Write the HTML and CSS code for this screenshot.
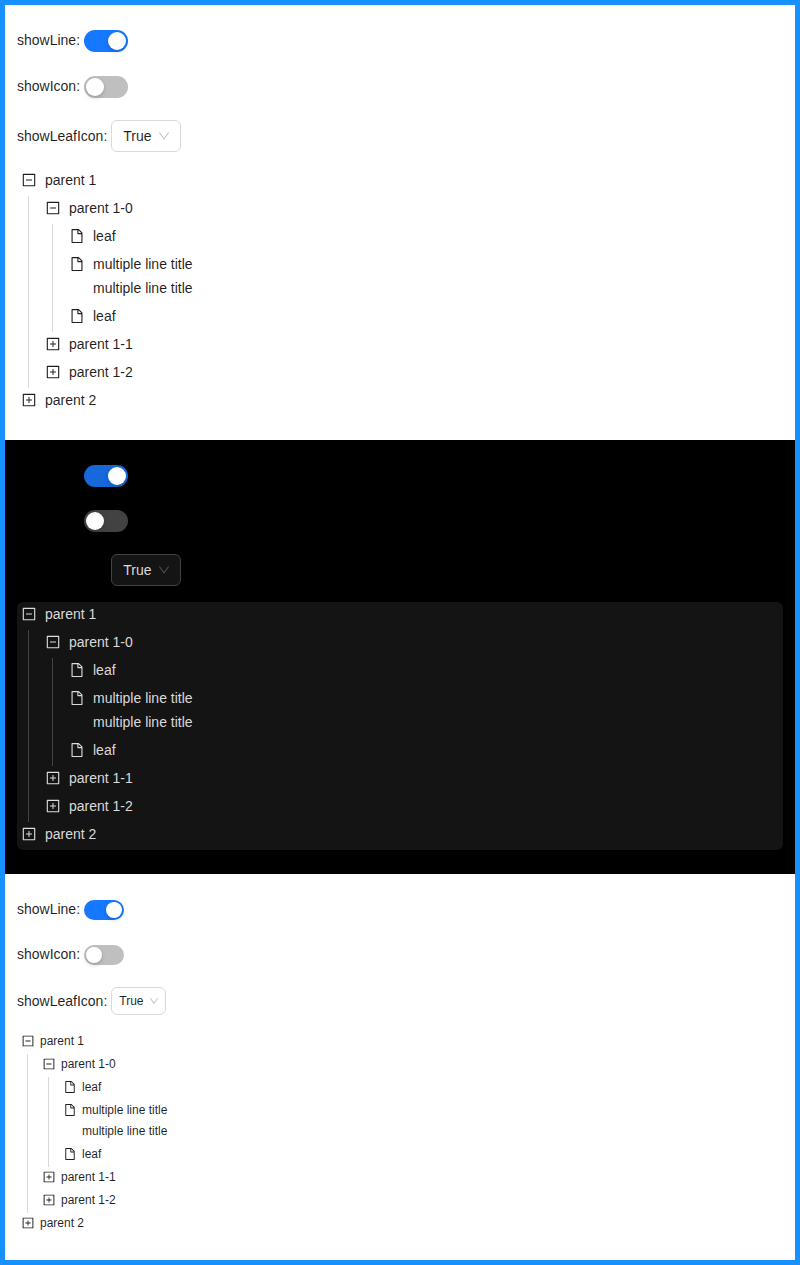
FILE: index.html
```html
<!DOCTYPE html>
<html lang="en">
<head>
<meta charset="utf-8">
<meta name="viewport" content="width=device-width, initial-scale=1">
<title>Tree with line</title>
<link rel="stylesheet" href="styles.css">
</head>
<body>
<svg class="sprite" aria-hidden="true">
  <symbol id="minus" viewBox="64 64 896 896"><path d="M328 544h368c4.400 0 8-3.600 8-8v-48c0-4.400-3.600-8-8-8H328c-4.400 0-8 3.600-8 8v48c0 4.400 3.600 8 8 8z"/><path d="M880 112H144c-17.700 0-32 14.300-32 32v736c0 17.700 14.300 32 32 32h736c17.700 0 32-14.300 32-32V144c0-17.700-14.300-32-32-32zm-40 728H184V184h656v656z"/></symbol>
  <symbol id="plus" viewBox="64 64 896 896"><path d="M328 544h152v152c0 4.400 3.600 8 8 8h48c4.400 0 8-3.600 8-8V544h152c4.400 0 8-3.600 8-8v-48c0-4.400-3.600-8-8-8H544V328c0-4.400-3.600-8-8-8h-48c-4.400 0-8 3.600-8 8v152H328c-4.400 0-8 3.600-8 8v48c0 4.400 3.600 8 8 8z"/><path d="M880 112H144c-17.700 0-32 14.300-32 32v736c0 17.700 14.300 32 32 32h736c17.700 0 32-14.300 32-32V144c0-17.700-14.300-32-32-32zm-40 728H184V184h656v656z"/></symbol>
  <symbol id="file" viewBox="64 64 896 896"><path d="M854.600 288.600L639.400 73.400c-6-6-14.100-9.400-22.600-9.400H192c-17.700 0-32 14.300-32 32v832c0 17.700 14.300 32 32 32h640c17.700 0 32-14.300 32-32V311.300c0-8.500-3.400-16.700-9.400-22.700zM790.200 326H602V137.800L790.200 326zm1.800 562H232V136h302v216a42 42 0 0042 42h216v494z"/></symbol>
  <symbol id="down" viewBox="64 64 896 896"><path d="M884 256h-75c-5.100 0-9.900 2.500-12.900 6.600L512 654.200 227.900 262.600c-3-4.100-7.800-6.600-12.900-6.600h-75c-6.500 0-10.300 7.400-6.500 12.700l352.600 486.100c12.800 17.600 39 17.600 51.700 0l352.600-486.100c3.900-5.300.1-12.700-6.400-12.700z"/></symbol>
</svg>
<main class="themes">
  <section class="panel">
    <div class="field"><label for="line-a">showLine:</label><input class="toggle" type="checkbox" role="switch" id="line-a" checked></div>
    <div class="field"><label for="icon-a">showIcon:</label><input class="toggle" type="checkbox" role="switch" id="icon-a"></div>
    <div class="field field-select"><label for="leaf-a">showLeafIcon:</label><span class="select"><select id="leaf-a"><option>True</option></select><svg class="arrow" aria-hidden="true"><use href="#down"/></svg></span></div>
    <ul class="tree">
      <li>
        <div class="node"><button class="switcher" type="button" aria-label="Collapse parent 1"><svg><use href="#minus"/></svg></button><span class="title">parent 1</span></div>
        <ul>
          <li>
            <div class="node"><button class="switcher" type="button" aria-label="Collapse parent 1-0"><svg><use href="#minus"/></svg></button><span class="title">parent 1-0</span></div>
            <ul>
              <li class="node"><span class="switcher"><svg><use href="#file"/></svg></span><span class="title">leaf</span></li>
              <li class="node"><span class="switcher"><svg><use href="#file"/></svg></span><span class="title">multiple line title<br>multiple line title</span></li>
              <li class="node"><span class="switcher"><svg><use href="#file"/></svg></span><span class="title">leaf</span></li>
            </ul>
          </li>
          <li class="node"><button class="switcher" type="button" aria-label="Expand parent 1-1"><svg><use href="#plus"/></svg></button><span class="title">parent 1-1</span></li>
          <li class="node"><button class="switcher" type="button" aria-label="Expand parent 1-2"><svg><use href="#plus"/></svg></button><span class="title">parent 1-2</span></li>
        </ul>
      </li>
      <li class="node"><button class="switcher" type="button" aria-label="Expand parent 2"><svg><use href="#plus"/></svg></button><span class="title">parent 2</span></li>
    </ul>
  </section>

  <section class="panel dark">
    <div class="field"><label for="line-b">showLine:</label><input class="toggle" type="checkbox" role="switch" id="line-b" checked></div>
    <div class="field"><label for="icon-b">showIcon:</label><input class="toggle" type="checkbox" role="switch" id="icon-b"></div>
    <div class="field field-select"><label for="leaf-b">showLeafIcon:</label><span class="select"><select id="leaf-b"><option>True</option></select><svg class="arrow" aria-hidden="true"><use href="#down"/></svg></span></div>
    <ul class="tree">
      <li>
        <div class="node"><button class="switcher" type="button" aria-label="Collapse parent 1"><svg><use href="#minus"/></svg></button><span class="title">parent 1</span></div>
        <ul>
          <li>
            <div class="node"><button class="switcher" type="button" aria-label="Collapse parent 1-0"><svg><use href="#minus"/></svg></button><span class="title">parent 1-0</span></div>
            <ul>
              <li class="node"><span class="switcher"><svg><use href="#file"/></svg></span><span class="title">leaf</span></li>
              <li class="node"><span class="switcher"><svg><use href="#file"/></svg></span><span class="title">multiple line title<br>multiple line title</span></li>
              <li class="node"><span class="switcher"><svg><use href="#file"/></svg></span><span class="title">leaf</span></li>
            </ul>
          </li>
          <li class="node"><button class="switcher" type="button" aria-label="Expand parent 1-1"><svg><use href="#plus"/></svg></button><span class="title">parent 1-1</span></li>
          <li class="node"><button class="switcher" type="button" aria-label="Expand parent 1-2"><svg><use href="#plus"/></svg></button><span class="title">parent 1-2</span></li>
        </ul>
      </li>
      <li class="node"><button class="switcher" type="button" aria-label="Expand parent 2"><svg><use href="#plus"/></svg></button><span class="title">parent 2</span></li>
    </ul>
  </section>

  <section class="panel compact">
    <div class="field"><label for="line-c">showLine:</label><input class="toggle" type="checkbox" role="switch" id="line-c" checked></div>
    <div class="field"><label for="icon-c">showIcon:</label><input class="toggle" type="checkbox" role="switch" id="icon-c"></div>
    <div class="field field-select"><label for="leaf-c">showLeafIcon:</label><span class="select"><select id="leaf-c"><option>True</option></select><svg class="arrow" aria-hidden="true"><use href="#down"/></svg></span></div>
    <ul class="tree">
      <li>
        <div class="node"><button class="switcher" type="button" aria-label="Collapse parent 1"><svg><use href="#minus"/></svg></button><span class="title">parent 1</span></div>
        <ul>
          <li>
            <div class="node"><button class="switcher" type="button" aria-label="Collapse parent 1-0"><svg><use href="#minus"/></svg></button><span class="title">parent 1-0</span></div>
            <ul>
              <li class="node"><span class="switcher"><svg><use href="#file"/></svg></span><span class="title">leaf</span></li>
              <li class="node"><span class="switcher"><svg><use href="#file"/></svg></span><span class="title">multiple line title<br>multiple line title</span></li>
              <li class="node"><span class="switcher"><svg><use href="#file"/></svg></span><span class="title">leaf</span></li>
            </ul>
          </li>
          <li class="node"><button class="switcher" type="button" aria-label="Expand parent 1-1"><svg><use href="#plus"/></svg></button><span class="title">parent 1-1</span></li>
          <li class="node"><button class="switcher" type="button" aria-label="Expand parent 1-2"><svg><use href="#plus"/></svg></button><span class="title">parent 1-2</span></li>
        </ul>
      </li>
      <li class="node"><button class="switcher" type="button" aria-label="Expand parent 2"><svg><use href="#plus"/></svg></button><span class="title">parent 2</span></li>
    </ul>
  </section>
</main>
</body>
</html>
```

FILE: styles.css
```css
*, *::before {
  box-sizing: border-box;
}

body {
  margin: 0;
  color: rgba(0, 0, 0, 0.88);
  font: 14px/22px "Liberation Sans", Arial, sans-serif;
}

.sprite {
  display: none;
}

.themes {
  border: 5px solid #1890ff;
}

.panel {
  --first-gap: 22px;
  --second-gap: 21px;
  --primary: #1677ff;
  --track: #bfbfbf;
  --text: rgba(0, 0, 0, 0.88);
  --surface: #fff;
  --line: #d9d9d9;
  --arrow: rgba(0, 0, 0, 0.25);
  --font: 14px;
  --row: 24px;
  --row-gap: 4px;
  --icon: 14px;
  --icon-row: 24px;
  --icon-inset: 5px;
  --title-pad: 4px;
  --guide-start: 11px;
  --guide-pad: 12px;
  --toggle-width: 44px;
  --handle: 18px;
  --select-width: 70px;
  --select-height: 32px;
  --select-pad: 11px;
  --arrow-size: 12px;
  padding: 24px 12px;
  background: #fff;
}

.dark {
  --first-gap: 21px;
  --primary: #1668dc;
  --track: #424242;
  --text: rgba(255, 255, 255, 0.85);
  --surface: #141414;
  --line: #424242;
  --arrow: rgba(255, 255, 255, 0.25);
  background: #000;
}

.compact {
  --first-gap: 21px;
  --second-gap: 20px;
  --font: 12px;
  --row: 21px;
  --row-gap: 2px;
  --icon: 12px;
  --icon-row: 20px;
  --title-pad: 2px;
  --guide-start: 10px;
  --guide-pad: 10px;
  --toggle-width: 40px;
  --handle: 16px;
  --select-width: 55px;
  --select-height: 28px;
  --select-pad: 7px;
  --arrow-size: 10px;
}

/* Controls */
.field {
  display: flex;
  align-items: center;
  gap: 4px;
  min-height: 24px;
  margin-bottom: var(--second-gap);
}

.field:first-child {
  margin-bottom: var(--first-gap);
}

.field label {
  padding-bottom: 2px;
}

.field-select {
  margin-bottom: 16px;
}

.field-select label {
  padding-bottom: 0;
}

.toggle {
  display: flex;
  appearance: none;
  width: var(--toggle-width);
  margin: 0;
  padding: 2px;
  border-radius: 16px;
  background: var(--track);
  cursor: pointer;
}

.toggle::before {
  content: "";
  width: var(--handle);
  height: var(--handle);
  border-radius: 50%;
  background: #fff;
  box-shadow: 0 2px 4px rgba(0, 35, 11, 0.2);
}

.toggle:checked {
  justify-content: flex-end;
  background: var(--primary);
}

.select {
  display: grid;
  align-items: center;
  width: var(--select-width);
  height: var(--select-height);
}

.select select,
.select .arrow {
  grid-area: 1 / 1;
}

.select select {
  appearance: none;
  width: 100%;
  height: 100%;
  margin: 0;
  padding: 0 var(--select-pad);
  border: 1px solid var(--line);
  border-radius: 6px;
  background: var(--surface);
  color: var(--text);
  font-family: inherit;
  font-size: var(--font);
}

.arrow {
  justify-self: end;
  width: var(--arrow-size);
  height: var(--arrow-size);
  margin-right: var(--select-pad);
  fill: var(--arrow);
  pointer-events: none;
}

/* Tree */
.tree,
.tree ul {
  margin: 0;
  padding: 0;
  list-style: none;
}

.tree {
  border-radius: 6px;
  background: var(--surface);
  color: var(--text);
  font-size: var(--font);
  line-height: var(--row);
}

.tree ul {
  margin-left: var(--guide-start);
  padding-left: var(--guide-pad);
  border-left: 1px solid var(--line);
}

.node {
  display: flex;
  align-items: flex-start;
  padding-bottom: var(--row-gap);
}

.switcher {
  display: flex;
  flex: none;
  align-items: center;
  width: var(--row);
  height: var(--icon-row);
  padding: 0 0 0 var(--icon-inset);
  border: 0;
  background: none;
  color: inherit;
}

.switcher svg {
  width: var(--icon);
  height: var(--icon);
  fill: currentColor;
}

.title {
  padding-left: var(--title-pad);
}
```
